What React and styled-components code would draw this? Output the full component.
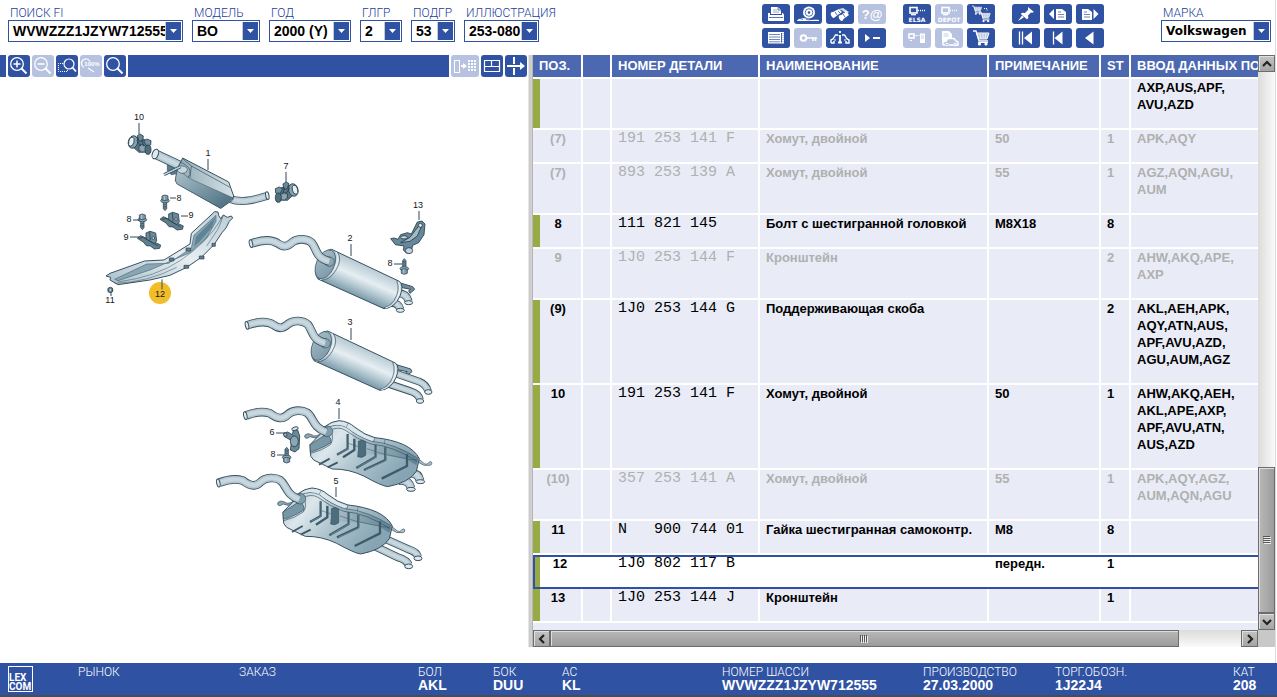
import { Fragment } from "react";
import styled, { createGlobalStyle } from "styled-components";

const BLUE = "#3052a2";
const HEAD = "#4c68b0";
const CELL = "#e9ecf6";
const GREEN = "#98aa43";
const OFF = "#b6c2df";

const GlobalStyle = createGlobalStyle`
  * {
    box-sizing: border-box;
  }
  body {
    margin: 0;
    background: #fff;
    font-family: "Liberation Sans", Arial, sans-serif;
    font-size: 13px;
  }
`;

const Page = styled.div`
  display: flex;
  flex-direction: column;
  height: 100vh;
  overflow: hidden;
`;

const Body = styled.div`
  flex: 1;
  min-height: 0;
  display: flex;
  flex-direction: column;
  margin-right: 1px;
  padding-bottom: 16px;
  border-right: 1px solid #dcdcdc;
`;

const TopBar = styled.header`
  display: flex;
  height: 55px;
  padding: 4px 4px 0 8px;
`;

const Fields = styled.div`
  display: flex;
  gap: 9px;
`;

const Field = styled.label`
  display: flex;
  flex-direction: column;
  width: ${(p) => p.$width}px;
  padding-top: 2px;
`;

const FieldName = styled.span`
  padding-left: 2px;
  font-family: Roboto, "Liberation Sans", sans-serif;
  font-size: 12px;
  font-weight: 300;
  line-height: 14px;
  color: #1c4096;
  white-space: nowrap;
`;

const SelectBox = styled.span`
  display: flex;
  height: 22px;
  padding: 1px;
  border: 1px solid ${BLUE};
  background: #fff;
`;

const Select = styled.select`
  flex: 1;
  min-width: 0;
  padding: 0 0 0 3px;
  border: 0;
  outline: 0;
  appearance: none;
  background: transparent;
  color: #000;
  font-family: ${(p) => (p.$wide ? '"DejaVu Sans", Verdana, sans-serif' : '"Liberation Sans", Arial, sans-serif')};
  font-size: ${(p) => (p.$wide ? 12 : 14)}px;
  font-weight: 700;
`;

const Arrow = styled.span`
  display: flex;
  align-items: center;
  justify-content: center;
  flex: none;
  width: 16px;
  background: ${BLUE};
  border-left: 1px solid #c9c9c9;
  pointer-events: none;
`;

const Tools = styled.div`
  display: flex;
  gap: 17px;
  margin-left: auto;
  margin-right: 57px;
`;

const ToolGroup = styled.div`
  display: grid;
  grid-template-columns: repeat(${(p) => p.$cols}, 28px);
  grid-auto-rows: 20px;
  gap: 4px;
`;

const IconButton = styled.button`
  display: block;
  flex: none;
  width: ${(p) => p.$width || 28}px;
  height: ${(p) => p.$height || 20}px;
  padding: 0;
  border: 0;
  border-radius: 3px;
  background: ${(p) => (p.disabled ? OFF : BLUE)};
  color: #fff;

  svg {
    display: block;
  }
`;

const Workspace = styled.main`
  flex: 1;
  min-height: 0;
  display: grid;
  grid-template-columns: 528fr 5px 742fr;
`;

const Drawing = styled.section`
  display: flex;
  flex-direction: column;
  min-width: 0;
  min-height: 0;
`;

const DrawingBar = styled.div`
  display: flex;
  gap: 2px;
  height: 22px;
  padding-right: 1px;
`;

const BarFill = styled.div`
  flex: ${(p) => (p.$stub ? "0 0 6px" : "1")};
  background: ${BLUE};
`;

const Canvas = styled.svg`
  flex: 1;
  min-height: 0;
  width: 100%;
`;

const Splitter = styled.div`
  background: linear-gradient(to right, #f4f4f4 0, #bdbdbd 2px, #dedede 3px, #a8a8a8 5px);
`;

const Parts = styled.section`
  display: grid;
  grid-template-columns: minmax(0, 1fr) 17px;
  grid-template-rows: minmax(0, 1fr) 17px;
`;

const ListView = styled.div`
  overflow: hidden;
  background: ${CELL};
`;

const Table = styled.table`
  width: 793px;
  table-layout: fixed;
  border-collapse: separate;
  border-spacing: 0;
`;

const Th = styled.th`
  height: 24px;
  padding: 0 0 0 6px;
  border-right: 2px solid #fff;
  border-bottom: 2px solid #fff;
  background: ${HEAD};
  color: #fff;
  font-size: 13px;
  line-height: 22px;
  text-align: left;
  white-space: nowrap;
`;

const Td = styled.td`
  padding: 0 0 15px 6px;
  border-right: 2px solid #fff;
  border-bottom: 2px solid #fff;
  vertical-align: top;
  font-weight: 700;
  line-height: 17px;
`;

const PosTd = styled(Td)`
  padding-left: 2px;
  text-align: center;
`;

const NumberTd = styled(Td)`
  font-family: "Liberation Mono", "Courier New", monospace;
  font-size: 15px;
  font-weight: 400;
  white-space: pre;
`;

const Tr = styled.tr`
  color: ${(p) => (p.$muted ? "#b0b0b0" : "#000")};

  ${Td} {
    background: ${CELL};
  }
  ${PosTd} {
    box-shadow: ${(p) => (p.$muted ? "none" : `inset 7px 0 ${GREEN}`)};
  }

  ${(p) =>
    p.$selected &&
    `
    td {
      padding-bottom: 17px !important;
      border-top: 2px solid ${BLUE};
      border-right: 0 !important;
      border-bottom: 2px solid ${BLUE} !important;
      background: #fff !important;
      line-height: 13px !important;
    }
    td:first-child {
      border-left: 2px solid ${BLUE};
      box-shadow: inset 5px 0 ${GREEN};
    }
  `}
`;

const ScrollBar = styled.div`
  display: flex;
  flex-direction: ${(p) => (p.$vertical ? "column" : "row")};
  background: linear-gradient(${(p) => (p.$vertical ? "to right" : "to bottom")}, #dcdcda, #fafafa);
`;

const ScrollButton = styled.button`
  display: flex;
  align-items: center;
  justify-content: center;
  flex: 0 0 17px;
  padding: 0;
  border: 1px solid #6c6c6c;
  background: linear-gradient(#c4c4c4, #a4a4a4);
  box-shadow: inset 1px 1px #e0e0e0;
`;

const Track = styled.div`
  flex: 1;
  display: flex;
  flex-direction: ${(p) => (p.$vertical ? "column" : "row")};
  justify-content: ${(p) => (p.$vertical ? "flex-end" : "flex-start")};
`;

const Thumb = styled.div`
  display: flex;
  align-items: center;
  justify-content: center;
  flex: 0 0 ${(p) => p.$size}%;
  border: 1px solid #6c6c6c;
  background: linear-gradient(${(p) => (p.$vertical ? "to right" : "to bottom")}, #b8b8b8, #9c9c9c);
  box-shadow: inset 1px 1px #dedede;
`;

const Corner = styled.div`
  background: #c8c8c6;
`;

const StatusBar = styled.footer`
  display: grid;
  grid-template-columns: 78fr 161fr 179fr 75fr 69fr 160fr 201fr 132fr 178fr 44fr;
  height: 34px;
  background: ${BLUE};
  border-bottom: 2px solid #4a4c55;
  color: #fff;
`;

const Status = styled.div`
  padding-top: 3px;
  white-space: nowrap;
`;

const StatusName = styled.div`
  font-family: Roboto, "Liberation Sans", sans-serif;
  font-size: 12px;
  font-weight: 300;
  line-height: 13px;
`;

const StatusValue = styled.div`
  font-size: 14px;
  font-weight: 700;
  line-height: 13px;
`;

const Logo = styled.div`
  width: 25px;
  height: 26px;
  margin: 3px 0 0 8px;
  padding-top: 6px;
  border: 1px solid #fff;
  font-family: Roboto, "Liberation Sans", sans-serif;
  font-size: 10px;
  font-weight: 700;
  line-height: 9px;
`;

const fields = [
  { name: "ПОИСК FI", value: "WVWZZZ1JZYW712555", width: 175 },
  { name: "МОДЕЛЬ", value: "BO", width: 68 },
  { name: "ГОД", value: "2000 (Y)", width: 82 },
  { name: "ГЛГР", value: "2", width: 42 },
  { name: "ПОДГР", value: "53", width: 44 },
  { name: "ИЛЛЮСТРАЦИЯ", value: "253-080", width: 75 },
];

const rows = [
  { pos: "", num: "", name: "", note: "", qty: "", data: ["AXP,AUS,APF,", "AVU,AZD"] },
  { pos: "(7)", num: "191 253 141 F", name: "Хомут, двойной", note: "50", qty: "1", data: ["APK,AQY"], muted: true },
  { pos: "(7)", num: "893 253 139 A", name: "Хомут, двойной", note: "55", qty: "1", data: ["AGZ,AQN,AGU,", "AUM"], muted: true },
  { pos: "8", num: "111 821 145", name: "Болт с шестигранной головкой", note: "M8X18", qty: "8", data: [] },
  { pos: "9", num: "1J0 253 144 F", name: "Кронштейн", note: "", qty: "2", data: ["AHW,AKQ,APE,", "AXP"], muted: true },
  { pos: "(9)", num: "1J0 253 144 G", name: "Поддерживающая скоба", note: "", qty: "2", data: ["AKL,AEH,APK,", "AQY,ATN,AUS,", "APF,AVU,AZD,", "AGU,AUM,AGZ"] },
  { pos: "10", num: "191 253 141 F", name: "Хомут, двойной", note: "50", qty: "1", data: ["AHW,AKQ,AEH,", "AKL,APE,AXP,", "APF,AVU,ATN,", "AUS,AZD"] },
  { pos: "(10)", num: "357 253 141 A", name: "Хомут, двойной", note: "55", qty: "1", data: ["APK,AQY,AGZ,", "AUM,AQN,AGU"], muted: true },
  { pos: "11", num: "N   900 744 01", name: "Гайка шестигранная самоконтр.", note: "M8", qty: "8", data: [] },
  { pos: "12", num: "1J0 802 117 B", name: "", note: "передн.", qty: "1", data: [], selected: true },
  { pos: "13", num: "1J0 253 144 J", name: "Кронштейн", note: "", qty: "1", data: [] },
];

const statuses = [
  ["РЫНОК", ""],
  ["ЗАКАЗ", ""],
  ["БОЛ", "AKL"],
  ["БОК", "DUU"],
  ["АС", "KL"],
  ["НОМЕР ШАССИ", "WVWZZZ1JZYW712555"],
  ["ПРОИЗВОДСТВО", "27.03.2000"],
  ["ТОРГ.ОБОЗН.", "1J22J4"],
  ["КАТ", "208"],
];

const cart = (
  <>
    <path d="M0 0h3l3 10h9" fill="none" stroke="#fff" strokeWidth="1.300" />
    <path d="M3.500 2H16l-2 6H5.500z" fill="#fff" fillOpacity=".5" stroke="#fff" />
    <path d="M4.500 4h11M5 6h10M7 2l1 6M10 2v6M13 2l-1 6" stroke="#fff" strokeWidth=".7" />
    <circle cx="6.500" cy="13" r="1.600" fill="#fff" />
    <circle cx="13" cy="13" r="1.600" fill="#fff" />
    <path d="M5 11.500h10" stroke="#fff" />
  </>
);

const monitor = (
  <>
    <rect x="7" y="3.500" width="7" height="5.500" fill="none" stroke="#fff" strokeWidth="1.600" />
    <path d="M8 10.700h5" stroke="#fff" strokeWidth="1.300" />
    <path d="M15 6.500h7" stroke="#fff" strokeWidth="1.300" strokeDasharray="1 1" />
  </>
);

// 28x20 drawings of the main toolbar
const icons = {
  print: (
    <g fill="#fff">
      <path d="M9 3h7l3 3v4H9z" />
      <path d="M6 9h2v2h12V9h1l1 2v6H6z" />
      <path d="M16 3v3h3M7 13.500h14" stroke={BLUE} strokeWidth=".8" fill="none" />
      <path d="M11 6h4M11 8h6" stroke={BLUE} strokeWidth=".5" />
    </g>
  ),
  brake: (
    <g fill="#fff">
      <circle cx="15" cy="8.500" r="6" />
      <circle cx="15" cy="8.500" r="3.800" fill="none" stroke={BLUE} strokeWidth=".8" />
      <circle cx="15" cy="8.500" r="1.300" fill={BLUE} />
      <path d="M3 17c1-3 5-2 6-3l5 1c3 2 8 0 11 1v1H3z" />
      <path d="M6 14.500l3 1M12 15.500l4 .5" stroke={BLUE} strokeWidth=".7" />
    </g>
  ),
  binoculars: (
    <g>
      <path d="M5 9l8-4 3 3-7 5z M13 13l7-6 3 4-7 5z" fill="#fff" />
      <path d="M13 5l4-1 6 4-2 2z" fill="#fff" fillOpacity=".8" />
      <ellipse cx="7" cy="11" rx="2" ry="3" fill="#fff" transform="rotate(-25 7 11)" />
      <ellipse cx="15" cy="14" rx="2" ry="3" fill="#fff" transform="rotate(-25 15 14)" />
      <path d="M9 8l2 3M17 10l2 3M12 7l2 2M15 6l4 3" stroke={BLUE} strokeWidth=".8" />
    </g>
  ),
  query: (
    <text x="14" y="15" fill="#fff" fontSize="13" fontWeight="700" textAnchor="middle" fontFamily="Liberation Sans">?@</text>
  ),
  list: (
    <g>
      <rect x="6" y="4" width="16" height="11.500" fill="#fff" />
      <path d="M7 6.500h11M7 9h11M7 11.500h11M7 13.800h11" stroke={BLUE} strokeWidth=".7" />
      <path d="M19.500 5v9.500" stroke={BLUE} strokeWidth=".9" />
      <path d="M21 5v10" stroke={BLUE} strokeDasharray="1 1" strokeWidth=".6" />
    </g>
  ),
  key: (
    <g>
      <circle cx="9.500" cy="10" r="2.800" fill="none" stroke="#fff" strokeWidth="2" />
      <path d="M12 10h11M19 10v3M21.500 10v3" stroke="#fff" strokeWidth="1.600" />
    </g>
  ),
  carInfo: (
    <g fill="none" stroke="#fff" strokeWidth="1.400">
      <path d="M5 15v-3l2-1 2.500-4H12M16 7h2.500l2.500 4 2 1v3h-3v-2M5 15h3v-2" />
      <path d="M14 3v2M14 7v7M12 14.500h4" strokeWidth="1.800" />
      <path d="M12.500 7.500H15M8 12h2M18 12h2" strokeWidth="1" />
    </g>
  ),
  next: (
    <g fill="#fff">
      <path d="M7 6l5 4-5 4z" />
      <path d="M15 9h7v2h-7z" />
    </g>
  ),
  elsa: (
    <g>
      {monitor}
      <text x="14" y="17.500" fill="#fff" fontSize="6" fontWeight="700" textAnchor="middle" fontFamily="DejaVu Sans">ELSA</text>
    </g>
  ),
  depot: (
    <g>
      {monitor}
      <text x="14" y="17.500" fill="#fff" fontSize="6" fontWeight="700" textAnchor="middle" fontFamily="DejaVu Sans">DEPOT</text>
    </g>
  ),
  carts: (
    <g>
      <g transform="translate(5 2) scale(.6)">{cart}</g>
      <g transform="translate(12 8) scale(.7)">{cart}</g>
      <path d="M17 4.500h3v3" fill="none" stroke="#fff" strokeDasharray="1 1" />
    </g>
  ),
  transfer: (
    <g>
      <rect x="6" y="6" width="5" height="4" fill="none" stroke="#fff" strokeWidth="1.600" />
      <path d="M7 12.500h3M12.500 7.500h4" stroke="#fff" strokeDasharray="2 1" />
      <rect x="17" y="5.500" width="5" height="9.500" fill="#fff" />
      <path d="M18 8h3M18 10h3" stroke={OFF} strokeWidth=".8" />
    </g>
  ),
  docCar: (
    <g>
      <path d="M7 3h7l3 3v4h-4l-3 4H7z" fill="#fff" />
      <path d="M8.500 6h5M8.500 8h5" stroke={OFF} strokeWidth=".8" />
      <path d="M8 17v-3l3-1 2-2.500h6l2 2.500 2 1v3h-3M8 17h2m4 0h5" fill="none" stroke="#fff" strokeWidth="1.500" />
      <circle cx="12" cy="16.500" r="1.300" fill="none" stroke="#fff" />
      <circle cx="20" cy="16.500" r="1.300" fill="none" stroke="#fff" />
    </g>
  ),
  cart: <g transform="translate(6 3)">{cart}</g>,
  pin: (
    <g fill="#fff">
      <path d="M16 3l6 5-2 .8-1-.3-3 3 .3 2.700-1.500 1-6-5.200 1.400-1.200 2.800.2 3-3z" />
      <path d="M10 11.500l2 1.700L6 17z" />
    </g>
  ),
  pagePrev: (
    <g>
      <path d="M10 5v10l-5-5z" fill="#fff" />
      <path d="M12 5h6l4 3v8H12z" fill="#fff" />
      <path d="M14 8h3M14 10.500h6M14 13h6" stroke={BLUE} strokeWidth=".7" />
    </g>
  ),
  pageNext: (
    <g>
      <path d="M17.500 5v10l5-5z" fill="#fff" />
      <path d="M6 5h6l4 3v8H6z" fill="#fff" />
      <path d="M8 8h3M8 10.500h6M8 13h6" stroke={BLUE} strokeWidth=".7" />
    </g>
  ),
  first: (
    <g>
      <path d="M7.500 3.500v13M10.500 3.500v13" stroke="#fff" strokeWidth="1.300" />
      <path d="M20 3.500v13L12 10z" fill="#fff" />
    </g>
  ),
  prevStart: (
    <g>
      <path d="M9.500 3.500v13" stroke="#fff" strokeWidth="1.300" />
      <path d="M18.500 3.500v13l-8-6.500z" fill="#fff" />
    </g>
  ),
  back: <path d="M17.500 3.500v13L9 10z" fill="#fff" />,
};

const toolGroups = [
  {
    cols: 4,
    items: [
      ["print", "Печать"],
      ["brake", "Запчасти"],
      ["binoculars", "Поиск"],
      ["query", "Запрос", true],
      ["list", "Список"],
      ["key", "Ключ", true],
      ["carInfo", "Автомобиль"],
      ["next", "Далее"],
    ],
  },
  {
    cols: 3,
    items: [
      ["elsa", "ELSA"],
      ["depot", "DEPOT", true],
      ["carts", "Корзины"],
      ["transfer", "Передача", true],
      ["docCar", "Документ", true],
      ["cart", "Корзина"],
    ],
  },
  {
    cols: 3,
    items: [
      ["pin", "Закрепить"],
      ["pagePrev", "Предыдущая страница"],
      ["pageNext", "Следующая страница"],
      ["first", "В начало"],
      ["prevStart", "К началу группы"],
      ["back", "Назад"],
    ],
  },
];

const lens = (
  <g fill="none" stroke="#fff">
    <circle cx="9" cy="9" r="6.300" strokeWidth="1.300" />
    <path d="M13.500 13.500l5 5" strokeWidth="2" />
  </g>
);

const zoomTools = [
  ["Увеличить", false, <g key="i">{lens}<path d="M5.500 9h7M9 5.500v7" stroke="#fff" strokeWidth="1.500" /></g>],
  ["Уменьшить", true, <g key="i">{lens}<path d="M5.500 9h7" stroke="#fff" strokeWidth="1.500" /></g>],
  [
    "Увеличить область",
    false,
    <g key="i" fill="none" stroke="#fff">
      <circle cx="13" cy="9" r="5" strokeWidth="1.200" />
      <path d="M16.500 12.500l3.500 4" strokeWidth="1.800" />
      <path d="M7 8.500H2.500v8h9V15" strokeDasharray="1 1" />
    </g>,
  ],
  [
    "100%",
    true,
    <g key="i">
      <path d="M4 12.500a4.500 4.500 0 1 1 6-6M8 13l6 4" fill="none" stroke="#fff" strokeWidth="1.200" />
      <text x="12" y="11" fill="#fff" fontSize="6" fontWeight="700" textAnchor="middle" fontFamily="Liberation Sans">100%</text>
    </g>,
  ],
  ["Лупа", false, <g key="i">{lens}</g>],
];

function Dropdown({ name, value, width, wide }) {
  return (
    <Field $width={width}>
      <FieldName>{name}</FieldName>
      <SelectBox>
        <Select $wide={wide} defaultValue={value}>
          <option>{value}</option>
        </Select>
        <Arrow>
          <svg width="7" height="4" viewBox="0 0 7 4">
            <path d="M0 0h7L3.500 4z" fill="#fff" />
          </svg>
        </Arrow>
      </SelectBox>
    </Field>
  );
}

function Chevron({ rotate }) {
  return (
    <svg width="10" height="10" viewBox="0 0 10 10" transform={`rotate(${rotate})`}>
      <path d="M1 7l4-4 4 4" fill="none" stroke="#222" strokeWidth="2.200" />
    </svg>
  );
}

const INK = "#37505e";

function Pipe({ d, width = 22 }) {
  return (
    <g fill="none" strokeLinejoin="round">
      <path d={d} stroke={INK} strokeWidth={width + 4} />
      <path d={d} stroke="#b3c7d1" strokeWidth={width - 1} />
      <path d={d} stroke="#c9d8df" strokeWidth={width / 2} />
    </g>
  );
}

function Opening({ x, y, rx = 5, ry = 12, turn = 0 }) {
  return (
    <ellipse cx={x} cy={y} rx={rx} ry={ry} transform={`rotate(${turn} ${x} ${y})`} fill="#dfe9ee" stroke={INK} strokeWidth="3" />
  );
}

function Bolt({ x, y, flip }) {
  return (
    <g transform={`translate(${x} ${y}) scale(1 ${flip ? -1 : 1})`} stroke={INK} strokeWidth="2.500">
      <path d="M-5 6H5v22l-5 6-5-6z" fill="#7896a4" />
      <path d="M-5 15H5M-5 21H5M-5 26H5" />
      <ellipse cx="0" cy="4" rx="13" ry="6" fill="#90aab6" />
      <path d="M-9-10L0-13l9 3v12q-9 4-18 0z" fill="#7b98a7" />
      <path d="M-2-10v12" stroke="#c6d6dd" />
    </g>
  );
}

function Bracket({ x, y }) {
  return (
    <g transform={`translate(${x} ${y})`} stroke="#2d4350" strokeWidth="2.500" strokeLinejoin="round">
      <path d="M-36-2l10-8 60 28-3 10-16 2-12-9-12-1-9-11z" fill="#5f7f8f" />
      <path d="M-10 0v-18l12-5 17 5 3 24-8 8z" fill="#6b8a99" />
      <path d="M1-22l2 26M-30-2l12-3 44 26" fill="none" />
      <circle cx="12" cy="-3" r="4" fill="#e4edf0" />
    </g>
  );
}

function DoubleClamp({ x, y, mirror }) {
  return (
    <g transform={`translate(${x} ${y}) scale(${mirror ? -1 : 1} 1)`} stroke="#263c48" strokeWidth="2.500">
      <path d="M-20-18l28 6 26 10-6 30-26 2-18-16z" fill="#587786" />
      <ellipse cx="-16" cy="-1" rx="14" ry="19" transform="rotate(15 -16 -1)" fill="#86a2af" />
      <ellipse cx="-21" cy="-2" rx="8" ry="14" transform="rotate(15 -21 -2)" fill="#e7f0f3" />
      <path d="M-3-20l8-5 10 6-2 14-10 2z" fill="#6b8998" />
      <path d="M16-4l10-6 12 5-1 13-11 5z" fill="#7391a0" />
      <path d="M2 10q12-8 22 5l-2 14q-14 3-20-6z" fill="#8ba6b2" />
      <ellipse cx="29" cy="22" rx="9" ry="14" fill="#4f6e7d" />
      <path d="M-5-6L8 12M10-8l6 20" />
    </g>
  );
}

function RoundMuffler({ x = 0, y = 0, children }) {
  return (
    <g transform={`translate(${x} ${y})`}>
      {children}
      <path
        d="M305 178L508 274Q523 286 510 318 495 354 462 356L264 267Q250 250 264 215 280 180 305 178z"
        fill="url(#cylinder)"
        stroke={INK}
        strokeWidth="3"
      />
      <path d="M322 186Q338 208 318 240 300 270 274 271M500 272Q512 300 492 332 478 352 460 354" fill="none" stroke={INK} strokeWidth="2" />
      <path d="M318 185Q332 208 313 238 296 266 270 268M506 276Q516 302 498 332 484 352 466 354" fill="none" stroke="#e9f1f4" strokeWidth="3" />
      <ellipse cx="286" cy="223" rx="27" ry="46" transform="rotate(24 286 223)" fill="url(#endcap)" stroke={INK} strokeWidth="2" />
      <ellipse cx="298" cy="215" rx="15" ry="14" fill="#8ba7b4" stroke={INK} strokeWidth="2" />
      <Pipe d="M66 160C92 151 122 146 143 160 164 176 176 166 188 156 203 144 232 146 245 158 260 174 256 205 298 214" />
      <Opening x={63} y={161} turn={-12} />
    </g>
  );
}

function FlatMuffler({ x = 0, y = 0, children }) {
  return (
    <g transform={`translate(${x} ${y})`} strokeLinejoin="round">
      {children}
      <path d="M350 128q-18 16-30 6-12-6-19 0-6 8 2 11 8 0 12-5 14 8 34 0" fill="#8aa6b3" stroke={INK} strokeWidth="2" />
      <path d="M636 205q14 8 22 16 8 4 12-2 6-8 10-2 2 10-9 9-14 4-32-10" fill="#a9c0ca" stroke={INK} strokeWidth="2" />
      <path
        d="M315 164L350 128 362 108Q380 94 402 92 430 94 450 112 480 136 510 143 560 148 596 164 630 180 643 206L634 244Q612 278 548 290 530 288 476 258 430 236 382 237 350 222 326 210 314 200 316 186z"
        fill="url(#flat)"
        stroke={INK}
        strokeWidth="3"
      />
      <path d="M440 122Q480 152 520 160 590 168 640 208L634 226 600 206 540 196 452 190z" fill="url(#flatDark)" opacity=".8" />
      <path d="M366 114Q396 98 424 112 458 140 500 154 570 160 640 206M372 122Q400 108 420 120 456 148 498 162 566 168 636 214" fill="none" stroke={INK} strokeWidth="2" />
      <path d="M366 110Q380 96 404 95 430 98 450 116 480 138 510 146L500 152Q458 138 424 110 396 98 366 110z" fill="#dbe7ec" />
      <path d="M315 164L362 134Q380 138 378 158 360 170 330 182L316 186z" fill="#7797a6" stroke={INK} strokeWidth="2" />
      <path d="M318 190Q350 182 376 164 388 148 378 122" fill="none" stroke={INK} strokeWidth="2" />
      <g fill="none" stroke="#3d5b6b" strokeWidth="7">
        <path d="M428 132v44l-32 18M448 146v34l-34 22M512 164v36l-58 34M541 172v38l-64 30M606 192v36l-76 38" />
        <path d="M342 224l32-18M368 232l30-15" strokeWidth="6" />
      </g>
      <path d="M460 154q14-8 22 2v40q-10 10-24 4 4-20 2-46z" fill="#4c6d7e" stroke={INK} strokeWidth="2" />
      <path d="M430 134v42l-30 16M514 166v34l-56 32M543 174v38l-62 28" fill="none" stroke="#7595a4" strokeWidth="2" />
      <path d="M430 160l30 10M486 176l24 8M516 186l26 8M546 194l56 12M610 208l26 2M510 143l-4 14M430 98l-6 12M540 150l-2 12" stroke={INK} strokeWidth="1.500" />
      <ellipse cx="366" cy="124" rx="17" ry="16" fill="#7f9eac" stroke={INK} strokeWidth="2" />
      <Pipe d="M124 76C150 66 176 64 195 70 218 88 234 88 248 74 264 58 292 60 306 68 326 82 322 112 364 126" />
      <Opening x={121} y={77} turn={-12} />
    </g>
  );
}

const callouts = [
  ["10", 139, 120, "M139 123v11"],
  ["1", 208, 156, "M208 159v11"],
  ["7", 286, 169, "M286 172v10"],
  ["8", 179, 201, "M170 198h6"],
  ["9", 191, 218, "M181 216h7"],
  ["8", 129, 222, "M133 220h7"],
  ["9", 126, 240, "M130 237h9"],
  ["11", 110, 303, "M111 292v4"],
  ["2", 350, 241, "M351 244v12"],
  ["13", 418, 208, "M419 211v9"],
  ["8", 390, 266, "M394 264h8"],
  ["3", 350, 325, "M351 328v12"],
  ["4", 338, 405, "M339 408v11"],
  ["6", 272, 435, "M276 433h9"],
  ["8", 273, 457, "M277 455h8"],
  ["5", 336, 484, "M336 487v10"],
];

function ExhaustDrawing() {
  return (
    <Canvas viewBox="0 77 528 570" preserveAspectRatio="xMinYMin meet" role="img" aria-label="Система выпуска">
      <defs>
        <linearGradient id="cylinder" gradientUnits="userSpaceOnUse" x1="412" y1="224" x2="372" y2="316">
          <stop offset="0" stopColor="#b4c7d0" />
          <stop offset=".25" stopColor="#cfdde3" />
          <stop offset=".45" stopColor="#e6eef2" />
          <stop offset=".7" stopColor="#b8cbd4" />
          <stop offset="1" stopColor="#7a9aaa" />
        </linearGradient>
        <linearGradient id="endcap" x1="0" y1="0" x2="1" y2="1">
          <stop offset="0" stopColor="#a9bfca" />
          <stop offset="1" stopColor="#7795a4" />
        </linearGradient>
        <linearGradient id="flat" x1="0" y1="0" x2="1" y2=".5">
          <stop offset="0" stopColor="#a3bac5" />
          <stop offset=".3" stopColor="#dce7ec" />
          <stop offset=".6" stopColor="#adc3cd" />
          <stop offset="1" stopColor="#86a4b3" />
        </linearGradient>
        <linearGradient id="flatDark" x1="0" y1="0" x2="1" y2="0">
          <stop offset="0" stopColor="#b3c8d1" />
          <stop offset="1" stopColor="#56798b" />
        </linearGradient>
        <linearGradient id="boxTop" x1="0" y1="0" x2="1" y2="0">
          <stop offset="0" stopColor="#8da9b5" />
          <stop offset="1" stopColor="#d5e1e6" />
        </linearGradient>
        <linearGradient id="boxSide" x1="0" y1="0" x2="1" y2="1">
          <stop offset="0" stopColor="#aec3cd" />
          <stop offset="1" stopColor="#45697c" />
        </linearGradient>
        <linearGradient id="shield" x1="0" y1="1" x2="1" y2="0">
          <stop offset="0" stopColor="#a9c0cb" />
          <stop offset=".5" stopColor="#e6eef2" />
          <stop offset="1" stopColor="#b9ccd5" />
        </linearGradient>
      </defs>

      <circle cx="160" cy="293" r="11" fill="#f2bd28" />

      {/* front silencer, clamps and heat shield */}
      <g transform="translate(90 100) scale(.33333)" strokeLinejoin="round">
        <DoubleClamp x={145} y={127} />
        <DoubleClamp x={594} y={271} mirror />
        <Pipe d="M418 296C450 308 480 304 530 288" width={20} />
        <Opening x={532} y={287} turn={-10} />
        <path d="M232 184l34 8v28l-22 4-12-12z" fill="#5d7d8d" stroke={INK} strokeWidth="2" />
        <Pipe d="M196 162L276 200" width={25} />
        <Opening x={196} y={162} rx={9} ry={15} turn={20} />
        <path d="M278 174L416 246 431 288 428 300 392 325 262 252 256 242 262 206z" fill="url(#boxTop)" stroke={INK} strokeWidth="3" />
        <path d="M262 208L300 236 430 294 392 325 262 252 256 242z" fill="url(#boxSide)" stroke={INK} strokeWidth="1.500" />
        <path d="M270 186Q296 196 300 212 302 226 294 232M278 176l26 22 116 64M304 198l-4 36" fill="none" stroke={INK} strokeWidth="2" />
        <ellipse cx="277" cy="209" rx="15" ry="11" fill="#c7d6dd" stroke={INK} strokeWidth="2" />
        <Pipe d="M222 224L272 200" width={5} />

        <path
          d="M48 528L60 520 164 483 222 480 300 432 304 400 374 335 384 336 386 346 392 356 400 345 412 352 424 348 428 354 418 364 408 384 396 398 372 434 334 472 290 502 240 526 180 540 84 554 60 540 62 532z"
          fill="url(#shield)"
          stroke={INK}
          strokeWidth="3"
        />
        <path d="M74 538L170 492 236 490 304 444 312 406 378 346 378 364 350 414 300 458 236 486 180 510 84 542z" fill="#88a6b4" stroke={INK} strokeWidth="1.500" />
        <path d="M312 440L318 410 376 352 366 382 330 424z" fill="#5f8496" />
        <path d="M84 546Q200 530 270 482 350 430 396 354M74 550Q170 548 260 502M400 346L386 384 350 438" fill="none" stroke={INK} strokeWidth="1.500" />
        <path
          d="M238 474h14v9h-14zM288 444h14v9h-14zM282 496h14v9h-14zM328 468h14v9h-14zM366 430h10v9h-10z"
          fill="#5e7f8f"
          stroke="#2d4350"
          strokeWidth="2"
        />

        <Bolt x={225} y={298} />
        <Bolt x={157} y={355} />
        <Bracket x={246} y={360} />
        <Bracket x={178} y={417} />
        <circle cx="61" cy="570" r="8" fill="#52707f" stroke="#22343d" strokeWidth="2" />
        <path d="M58 566h6v8h-6z" fill="#b9cad1" />
        <path d="M216 538v30" stroke={INK} strokeWidth="3" />
      </g>

      {/* rear silencers with round body */}
      <g transform="translate(230 190) scale(.33333)" strokeLinejoin="round">
        <RoundMuffler>
          <path d="M508 278l40 12 6 8-14 12-4-8 6-4-30-6z" fill="#6d8d9c" stroke={INK} strokeWidth="3" />
          <Pipe d="M504 310Q530 310 536 334" width={20} />
          <Pipe d="M482 338Q506 338 511 358" width={20} />
          <Opening x={536} y={338} rx={12} ry={6} />
          <Opening x={511} y={361} rx={12} ry={6} />
        </RoundMuffler>
        <RoundMuffler x={-12} y={245}>
          <path d="M508 278l46 14 4 8-16 12-4-8 6-4-30-6z" fill="#8ba6b3" stroke={INK} strokeWidth="3" />
          <Pipe d="M500 302L580 330Q600 338 606 358" width={19} />
          <Pipe d="M480 334L552 358Q578 366 582 384" width={19} />
          <Opening x={607} y={361} rx={11} ry={7} />
          <Opening x={582} y={388} rx={11} ry={7} />
        </RoundMuffler>

        <g stroke="#263c48" strokeWidth="2.500">
          <path d="M562 96l14-3 9 9-3 32-16 24-18 8-4 18-14 6-10-10 2-12-26-4-14-18 10-2 12 4 8-14 20-6 12 4z" fill="#67889a" />
          <path d="M566 108L540 142 512 158 540 154 562 138 574 110z" fill="#a3bbc6" />
          <ellipse cx="522" cy="142" rx="10" ry="5" fill="#c6d7de" />
          <circle cx="571" cy="106" r="6" fill="#dfe9ed" />
          <ellipse cx="537" cy="182" rx="11" ry="9" fill="#c3d4dc" />
        </g>
        <Bolt x={523} y={240} flip />
      </g>

      {/* rear silencers with flat body */}
      <g transform="translate(205 390) scale(.33333)" strokeLinejoin="round">
        <FlatMuffler>
          <Pipe d="M610 250Q640 246 645 272" />
          <Pipe d="M580 272Q612 268 618 294" />
          <Opening x={646} y={275} rx={13} ry={6} />
          <Opening x={618} y={298} rx={13} ry={6} />
        </FlatMuffler>
        <FlatMuffler x={-81} y={202}>
          <Pipe d="M620 244L692 276Q716 284 720 298" width={20} />
          <Pipe d="M580 262L660 300Q686 308 692 322" width={20} />
          <Opening x={720} y={303} rx={12} ry={7} />
          <Opening x={692} y={327} rx={12} ry={7} />
        </FlatMuffler>
        <g stroke="#263c48" strokeWidth="2.500">
          <path d="M236 130l12-4 14 8 4-16 12 2 6 18-2 38-12 10-14-6 4-28-14-8-8-4z" fill="#6a8a99" />
          <ellipse cx="268" cy="154" rx="12" ry="16" fill="#8ba7b4" />
          <ellipse cx="270" cy="116" rx="10" ry="5" transform="rotate(-15 270 116)" fill="#d8e4e9" />
          <circle cx="241" cy="134" r="5" fill="#a5bcc7" />
        </g>
        <Bolt x={245} y={206} flip />
      </g>

      <g stroke="#33475a" strokeWidth="1" fill="none">
        {callouts.map(([label, x, y, line]) => (
          <path key={label + x + y} d={line} />
        ))}
      </g>
      <g fill="#11181e" fontFamily="Liberation Sans, Arial, sans-serif" fontSize="9" textAnchor="middle">
        {callouts.map(([label, x, y]) => (
          <text key={label + x + y} x={x} y={y}>
            {label}
          </text>
        ))}
        <text x="160" y="297">12</text>
      </g>
    </Canvas>
  );
}

function PartsTable() {
  return (
    <Table>
      <colgroup>
        <col width="50" />
        <col width="29" />
        <col width="148" />
        <col width="229" />
        <col width="112" />
        <col width="30" />
        <col />
      </colgroup>
      <thead>
        <tr>
          <Th>ПОЗ.</Th>
          <Th />
          <Th>НОМЕР ДЕТАЛИ</Th>
          <Th>НАИМЕНОВАНИЕ</Th>
          <Th>ПРИМЕЧАНИЕ</Th>
          <Th>ST</Th>
          <Th>ВВОД ДАННЫХ ПО</Th>
        </tr>
      </thead>
      <tbody>
        {rows.map((row, i) => (
          <Tr key={i} $muted={row.muted} $selected={row.selected}>
            <PosTd>{row.pos}</PosTd>
            <Td />
            <NumberTd>{row.num}</NumberTd>
            <Td>{row.name}</Td>
            <Td>{row.note}</Td>
            <Td>{row.qty}</Td>
            <Td>
              {row.data.map((line) => (
                <Fragment key={line}>
                  {line}
                  <br />
                </Fragment>
              ))}
            </Td>
          </Tr>
        ))}
      </tbody>
    </Table>
  );
}

function App() {
  return (
    <Page>
      <GlobalStyle />
      <Body>
        <TopBar>
          <Fields>
            {fields.map((f) => (
              <Dropdown key={f.name} {...f} />
            ))}
          </Fields>
          <Tools>
            {toolGroups.map((group, i) => (
              <ToolGroup key={i} $cols={group.cols}>
                {group.items.map(([icon, label, disabled]) => (
                  <IconButton key={icon} aria-label={label} disabled={disabled}>
                    <svg width="28" height="20" viewBox="0 0 28 20">
                      {icons[icon]}
                    </svg>
                  </IconButton>
                ))}
              </ToolGroup>
            ))}
          </Tools>
          <Dropdown name="МАРКА" value="Volkswagen" width={110} wide />
        </TopBar>

        <Workspace>
          <Drawing>
            <DrawingBar>
              <BarFill $stub />
              {zoomTools.map(([label, disabled, icon]) => (
                <IconButton key={label} $width={22} $height={22} aria-label={label} disabled={disabled}>
                  <svg width="22" height="22" viewBox="0 0 22 22">
                    {icon}
                  </svg>
                </IconButton>
              ))}
              <BarFill />
              <IconButton $height={22} aria-label="Показать таблицу" disabled>
                <svg width="28" height="22" viewBox="0 0 28 22">
                  <rect x="3.500" y="5.500" width="5" height="12" fill="none" stroke="#fff" />
                  <path d="M10 10h2V8l4 3-4 3v-2h-2z" fill="#fff" />
                  <path d="M17 6h8M17 9h8M17 12h8M17 15h8" stroke="#fff" strokeWidth="2" strokeDasharray="2 1" />
                </svg>
              </IconButton>
              <IconButton $width={22} $height={22} aria-label="Расположение окон">
                <svg width="22" height="22" viewBox="0 0 22 22">
                  <path d="M3.500 5.500h15v11h-15zM3.500 11.500h15M10.500 5.500v6" fill="none" stroke="#fff" strokeWidth="1.200" />
                </svg>
              </IconButton>
              <IconButton $width={22} $height={22} aria-label="Сдвинуть разделитель">
                <svg width="22" height="22" viewBox="0 0 22 22">
                  <path d="M9 2v7M9 13v7" stroke="#fff" strokeWidth="2" />
                  <path d="M2 11h14" stroke="#fff" strokeWidth="2" />
                  <path d="M15 7l5 4-5 4z" fill="#fff" />
                </svg>
              </IconButton>
            </DrawingBar>
            <ExhaustDrawing />
          </Drawing>

          <Splitter />

          <Parts>
            <ListView>
              <PartsTable />
            </ListView>
            <ScrollBar $vertical>
              <ScrollButton aria-label="Вверх">
                <Chevron rotate={0} />
              </ScrollButton>
              <Track $vertical>
                <Thumb $vertical $size={27}>
                  <svg width="8" height="8" viewBox="0 0 8 8">
                    <path d="M0 .5h7M0 2.500h7M0 4.500h7M0 6.500h7" stroke="#555" />
                    <path d="M1 1.500h7M1 3.500h7M1 5.500h7M1 7.500h7" stroke="#eee" />
                  </svg>
                </Thumb>
              </Track>
              <ScrollButton aria-label="Вниз">
                <Chevron rotate={180} />
              </ScrollButton>
            </ScrollBar>
            <ScrollBar>
              <ScrollButton aria-label="Влево">
                <Chevron rotate={-90} />
              </ScrollButton>
              <Track>
                <Thumb $size={91}>
                  <svg width="8" height="8" viewBox="0 0 8 8">
                    <path d="M.5 0v7M2.500 0v7M4.500 0v7M6.500 0v7" stroke="#555" />
                    <path d="M1.500 1v7M3.500 1v7M5.500 1v7M7.500 1v7" stroke="#eee" />
                  </svg>
                </Thumb>
              </Track>
              <ScrollButton aria-label="Вправо">
                <Chevron rotate={90} />
              </ScrollButton>
            </ScrollBar>
            <Corner />
          </Parts>
        </Workspace>
      </Body>

      <StatusBar>
        <Logo>
          LEX
          <br />
          COM
        </Logo>
        {statuses.map(([name, value]) => (
          <Status key={name}>
            <StatusName>{name}</StatusName>
            <StatusValue>{value}</StatusValue>
          </Status>
        ))}
      </StatusBar>
    </Page>
  );
}

export default App;
